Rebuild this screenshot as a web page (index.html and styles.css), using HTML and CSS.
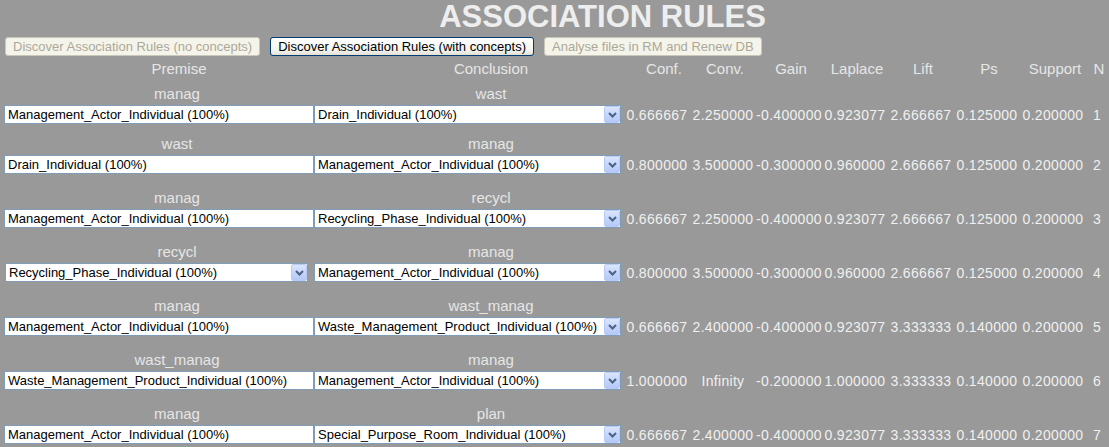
FILE: index.html
```html
<!DOCTYPE html>
<html>
<head>
<meta charset="utf-8">
<title>Association Rules</title>
<link rel="stylesheet" href="styles.css">
</head>
<body>
<div class="page">
  <h1 class="title">ASSOCIATION RULES</h1>
  <div class="actions">
    <button class="btn" disabled>Discover Association Rules (no concepts)</button>
    <button class="btn btn--active">Discover Association Rules (with concepts)</button>
    <button class="btn" disabled>Analyse files in RM and Renew DB</button>
  </div>

  <div class="grid head">
    <div class="h h--p">Premise</div>
    <div class="h h--c">Conclusion</div>
    <div class="h h--conf">Conf.</div>
    <div class="h">Conv.</div>
    <div class="h">Gain</div>
    <div class="h">Laplace</div>
    <div class="h">Lift</div>
    <div class="h">Ps</div>
    <div class="h">Support</div>
    <div class="h">N</div>
  </div>

  <div class="rules">
    <div class="rule">
      <div class="grid labels"><div class="lbl lbl--p">manag</div><div class="lbl lbl--c">wast</div></div>
      <div class="grid fields">
        <div class="field">Management_Actor_Individual (100%)</div>
        <div class="combo"><span class="combo__text">Drain_Individual (100%)</span><span class="combo__btn"><svg width="9" height="6" viewBox="0 0 9 6"><path d="M1 1 L4.5 4.5 L8 1" fill="none" stroke="#4d6185" stroke-width="2"/></svg></span></div>
        <div class="v">0.666667</div><div class="v">2.250000</div><div class="v">-0.400000</div><div class="v">0.923077</div><div class="v">2.666667</div><div class="v">0.125000</div><div class="v">0.200000</div><div class="v">1</div>
      </div>
    </div>

    <div class="rule">
      <div class="grid labels"><div class="lbl lbl--p">wast</div><div class="lbl lbl--c">manag</div></div>
      <div class="grid fields">
        <div class="field">Drain_Individual (100%)</div>
        <div class="combo"><span class="combo__text">Management_Actor_Individual (100%)</span><span class="combo__btn"><svg width="9" height="6" viewBox="0 0 9 6"><path d="M1 1 L4.5 4.5 L8 1" fill="none" stroke="#4d6185" stroke-width="2"/></svg></span></div>
        <div class="v">0.800000</div><div class="v">3.500000</div><div class="v">-0.300000</div><div class="v">0.960000</div><div class="v">2.666667</div><div class="v">0.125000</div><div class="v">0.200000</div><div class="v">2</div>
      </div>
    </div>

    <div class="rule">
      <div class="grid labels"><div class="lbl lbl--p">manag</div><div class="lbl lbl--c">recycl</div></div>
      <div class="grid fields">
        <div class="field">Management_Actor_Individual (100%)</div>
        <div class="combo"><span class="combo__text">Recycling_Phase_Individual (100%)</span><span class="combo__btn"><svg width="9" height="6" viewBox="0 0 9 6"><path d="M1 1 L4.5 4.5 L8 1" fill="none" stroke="#4d6185" stroke-width="2"/></svg></span></div>
        <div class="v">0.666667</div><div class="v">2.250000</div><div class="v">-0.400000</div><div class="v">0.923077</div><div class="v">2.666667</div><div class="v">0.125000</div><div class="v">0.200000</div><div class="v">3</div>
      </div>
    </div>

    <div class="rule">
      <div class="grid labels"><div class="lbl lbl--p">recycl</div><div class="lbl lbl--c">manag</div></div>
      <div class="grid fields">
        <div class="combo combo--premise"><span class="combo__text">Recycling_Phase_Individual (100%)</span><span class="combo__btn"><svg width="9" height="6" viewBox="0 0 9 6"><path d="M1 1 L4.5 4.5 L8 1" fill="none" stroke="#4d6185" stroke-width="2"/></svg></span></div>
        <div class="combo"><span class="combo__text">Management_Actor_Individual (100%)</span><span class="combo__btn"><svg width="9" height="6" viewBox="0 0 9 6"><path d="M1 1 L4.5 4.5 L8 1" fill="none" stroke="#4d6185" stroke-width="2"/></svg></span></div>
        <div class="v">0.800000</div><div class="v">3.500000</div><div class="v">-0.300000</div><div class="v">0.960000</div><div class="v">2.666667</div><div class="v">0.125000</div><div class="v">0.200000</div><div class="v">4</div>
      </div>
    </div>

    <div class="rule">
      <div class="grid labels"><div class="lbl lbl--p">manag</div><div class="lbl lbl--c">wast_manag</div></div>
      <div class="grid fields">
        <div class="field">Management_Actor_Individual (100%)</div>
        <div class="combo"><span class="combo__text">Waste_Management_Product_Individual (100%)</span><span class="combo__btn"><svg width="9" height="6" viewBox="0 0 9 6"><path d="M1 1 L4.5 4.5 L8 1" fill="none" stroke="#4d6185" stroke-width="2"/></svg></span></div>
        <div class="v">0.666667</div><div class="v">2.400000</div><div class="v">-0.400000</div><div class="v">0.923077</div><div class="v">3.333333</div><div class="v">0.140000</div><div class="v">0.200000</div><div class="v">5</div>
      </div>
    </div>

    <div class="rule">
      <div class="grid labels"><div class="lbl lbl--p">wast_manag</div><div class="lbl lbl--c">manag</div></div>
      <div class="grid fields">
        <div class="field">Waste_Management_Product_Individual (100%)</div>
        <div class="combo"><span class="combo__text">Management_Actor_Individual (100%)</span><span class="combo__btn"><svg width="9" height="6" viewBox="0 0 9 6"><path d="M1 1 L4.5 4.5 L8 1" fill="none" stroke="#4d6185" stroke-width="2"/></svg></span></div>
        <div class="v">1.000000</div><div class="v">Infinity</div><div class="v">-0.200000</div><div class="v">1.000000</div><div class="v">3.333333</div><div class="v">0.140000</div><div class="v">0.200000</div><div class="v">6</div>
      </div>
    </div>

    <div class="rule">
      <div class="grid labels"><div class="lbl lbl--p">manag</div><div class="lbl lbl--c">plan</div></div>
      <div class="grid fields">
        <div class="field">Management_Actor_Individual (100%)</div>
        <div class="combo"><span class="combo__text">Special_Purpose_Room_Individual (100%)</span><span class="combo__btn"><svg width="9" height="6" viewBox="0 0 9 6"><path d="M1 1 L4.5 4.5 L8 1" fill="none" stroke="#4d6185" stroke-width="2"/></svg></span></div>
        <div class="v">0.666667</div><div class="v">2.400000</div><div class="v">-0.400000</div><div class="v">0.923077</div><div class="v">3.333333</div><div class="v">0.140000</div><div class="v">0.200000</div><div class="v">7</div>
      </div>
    </div>
  </div>
</div>
</body>
</html>
```

FILE: styles.css
```css
html, body {
  margin: 0;
  padding: 0;
  background: #999999;
  overflow: hidden;
}

.page {
  padding: 0 0 0 4px;
  font-family: "Liberation Sans", Arial, sans-serif;
  color: #efefef;
}

.title {
  margin: 0;
  padding-left: 92px;
  text-align: center;
  font-size: 31px;
  line-height: 34px;
  font-weight: bold;
  color: #eeeeee;
}

.actions {
  display: flex;
  gap: 10px;
  margin: 3px 0 0 1px;
}

.btn {
  box-sizing: border-box;
  height: 19px;
  padding: 0 7px;
  font-family: "Liberation Sans", Arial, sans-serif;
  font-size: 13px;
  line-height: 17px;
  border: 1px solid #c9c7ba;
  border-radius: 3px;
  background: #f5f4ea;
  color: #aca899;
  white-space: nowrap;
}

.btn--active {
  border-color: #003c74;
  background: linear-gradient(#ffffff, #f4f4f0 70%, #e3e0d5);
  color: #000000;
}

.grid {
  display: grid;
  grid-template-columns: 310px 310px repeat(7, 66px) 22px;
  align-items: center;
}

.head {
  margin-top: 4px;
  height: 18px;
  font-size: 15px;
  line-height: 18px;
  color: #e6e6e6;
}

.h {
  text-align: center;
  padding-left: 4px;
  white-space: nowrap;
}

.h--p { padding-left: 40px; }
.h--c { padding-left: 44px; }
.h--conf { padding-left: 14px; }

.rules {
  margin-top: 7px;
}

.rule + .rule {
  margin-top: 15px;
}

.rule:nth-child(2) {
  margin-top: 11px;
}

.labels {
  height: 18px;
  font-size: 15px;
  line-height: 18px;
  color: #e6e6e6;
}

.lbl {
  text-align: center;
  white-space: nowrap;
}

.lbl--p { padding-left: 36px; }
.lbl--c { padding-left: 44px; }

.fields {
  margin-top: 2px;
  height: 19px;
}

.field,
.combo {
  box-sizing: border-box;
  height: 19px;
  border: 1px solid #7f9db9;
  background: #ffffff;
  color: #000000;
  font-size: 13px;
  line-height: 17px;
  white-space: nowrap;
  overflow: hidden;
}

.field {
  width: 310px;
  padding: 0 3px;
}

.combo {
  width: 307px;
  display: flex;
  align-items: center;
}

.combo--premise {
  width: 303px;
  margin-left: 1px;
}

.combo__text {
  flex: 1;
  padding-left: 3px;
  overflow: hidden;
}

.combo__btn {
  box-sizing: border-box;
  width: 16px;
  height: 17px;
  border: 1px solid #b9cbf3;
  border-radius: 2px;
  background: linear-gradient(#dbe5fd, #c1d3fb 60%, #b6c9f7);
  display: flex;
  align-items: center;
  justify-content: center;
}

.v {
  text-align: center;
  font-size: 14px;
  letter-spacing: 0.3px;
  line-height: 18px;
  color: #f0f0f0;
  white-space: nowrap;
}
```
